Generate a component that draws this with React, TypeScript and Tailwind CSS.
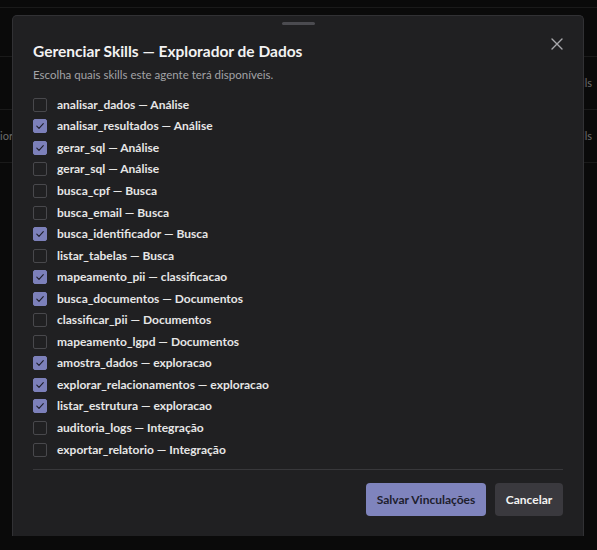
import React from 'react';

interface Skill {
  name: string;
  group: string;
  checked: boolean;
}

const SKILLS: Skill[] = [
  { name: 'analisar_dados', group: 'Análise', checked: false },
  { name: 'analisar_resultados', group: 'Análise', checked: true },
  { name: 'gerar_sql', group: 'Análise', checked: true },
  { name: 'gerar_sql', group: 'Análise', checked: false },
  { name: 'busca_cpf', group: 'Busca', checked: false },
  { name: 'busca_email', group: 'Busca', checked: false },
  { name: 'busca_identificador', group: 'Busca', checked: true },
  { name: 'listar_tabelas', group: 'Busca', checked: false },
  { name: 'mapeamento_pii', group: 'classificacao', checked: true },
  { name: 'busca_documentos', group: 'Documentos', checked: true },
  { name: 'classificar_pii', group: 'Documentos', checked: false },
  { name: 'mapeamento_lgpd', group: 'Documentos', checked: false },
  { name: 'amostra_dados', group: 'exploracao', checked: true },
  { name: 'explorar_relacionamentos', group: 'exploracao', checked: true },
  { name: 'listar_estrutura', group: 'exploracao', checked: true },
  { name: 'auditoria_logs', group: 'Integração', checked: false },
  { name: 'exportar_relatorio', group: 'Integração', checked: false },
];

const Check: React.FC<{ checked: boolean; onClick: () => void }> = ({ checked, onClick }) => (
  <button
    type="button"
    onClick={onClick}
    className={`flex h-[14px] w-[14px] shrink-0 items-center justify-center rounded-[2px] border ${
      checked ? 'border-[#7c80ba] bg-[#7c80ba]' : 'border-[#48484c] bg-transparent'
    }`}
  >
    {checked && (
      <svg width="10" height="10" viewBox="0 0 10 10" fill="none">
        <path d="M1.8 5.2 L4 7.3 L8.3 2.6" stroke="#1d1d2a" strokeWidth="1.1" strokeLinecap="round" strokeLinejoin="round" />
      </svg>
    )}
  </button>
);

export default function App() {
  const [skills, setSkills] = React.useState<Skill[]>(SKILLS);

  const toggle = (i: number) =>
    setSkills((prev) => prev.map((s, j) => (j === i ? { ...s, checked: !s.checked } : s)));

  return (
    <div
      className="relative h-[550px] w-[597px] overflow-hidden bg-[#0a0a0a] text-[#e6e6e6]"
      style={{ fontFamily: 'Lato, "Noto Sans", sans-serif' }}
    >
      {/* page behind the sheet */}
      <div className="flex flex-col text-[11px] text-[#6c6c6c]">
        <div className="h-[8px] border-b border-[#1a1a1a]" />
        <div className="h-[49px] border-b border-[#1a1a1a]" />
        <div className="flex h-[53px] items-center justify-end border-b border-[#1a1a1a] pr-[5px]">3 skills</div>
        <div className="flex h-[53px] items-center justify-between border-b border-[#1a1a1a] pr-[5px]">
          <span>ior</span>
          <span>5 skills</span>
        </div>
      </div>

      {/* sheet */}
      <div className="absolute left-[12px] top-[15px] flex h-[521px] w-[572px] flex-col rounded-t-[5px] border border-b-0 border-[#313134] bg-[#202022] px-[20px]">
        <div className="mx-auto mt-[6px] h-[3px] w-[33px] rounded-full bg-[#4b4b50]" />

        <div className="mt-[16px] flex items-start justify-between">
          <h2 className="text-[15.5px] font-bold leading-[20px] text-[#f2f2f2]">Gerenciar Skills — Explorador de Dados</h2>
          <button type="button" className="mr-[-1px] mt-[-4px] text-[#a8a8ac]">
            <svg width="14" height="14" viewBox="0 0 14 14" fill="none">
              <path d="M2 2 L12 12 M12 2 L2 12" stroke="currentColor" strokeWidth="1.4" strokeLinecap="round" />
            </svg>
          </button>
        </div>
        <p className="mt-[6px] text-[11.5px] leading-[16px] text-[#a3a3a6]">Escolha quais skills este agente terá disponíveis.</p>

        <ul className="mt-[11px] flex flex-col">
          {skills.map((s, i) => (
            <li key={i} className="flex h-[21.56px] items-center gap-[10px]">
              <Check checked={s.checked} onClick={() => toggle(i)} />
              <span className="text-[12px] font-bold text-[#e6e6e6]">
                {s.name} — {s.group}
              </span>
            </li>
          ))}
        </ul>

        <div className="mt-[9px] h-px bg-[#38383b]" />

        <div className="mt-[13px] flex justify-end gap-[9px]">
          <button type="button" className="h-[33px] w-[120px] rounded-[4px] bg-[#7f84bd] text-[12px] font-bold text-[#20202e]">
            Salvar Vinculações
          </button>
          <button type="button" className="h-[33px] w-[68px] rounded-[4px] bg-[#3a393e] text-[12px] font-bold text-[#f3f3f3]">
            Cancelar
          </button>
        </div>
      </div>
    </div>
  );
}
